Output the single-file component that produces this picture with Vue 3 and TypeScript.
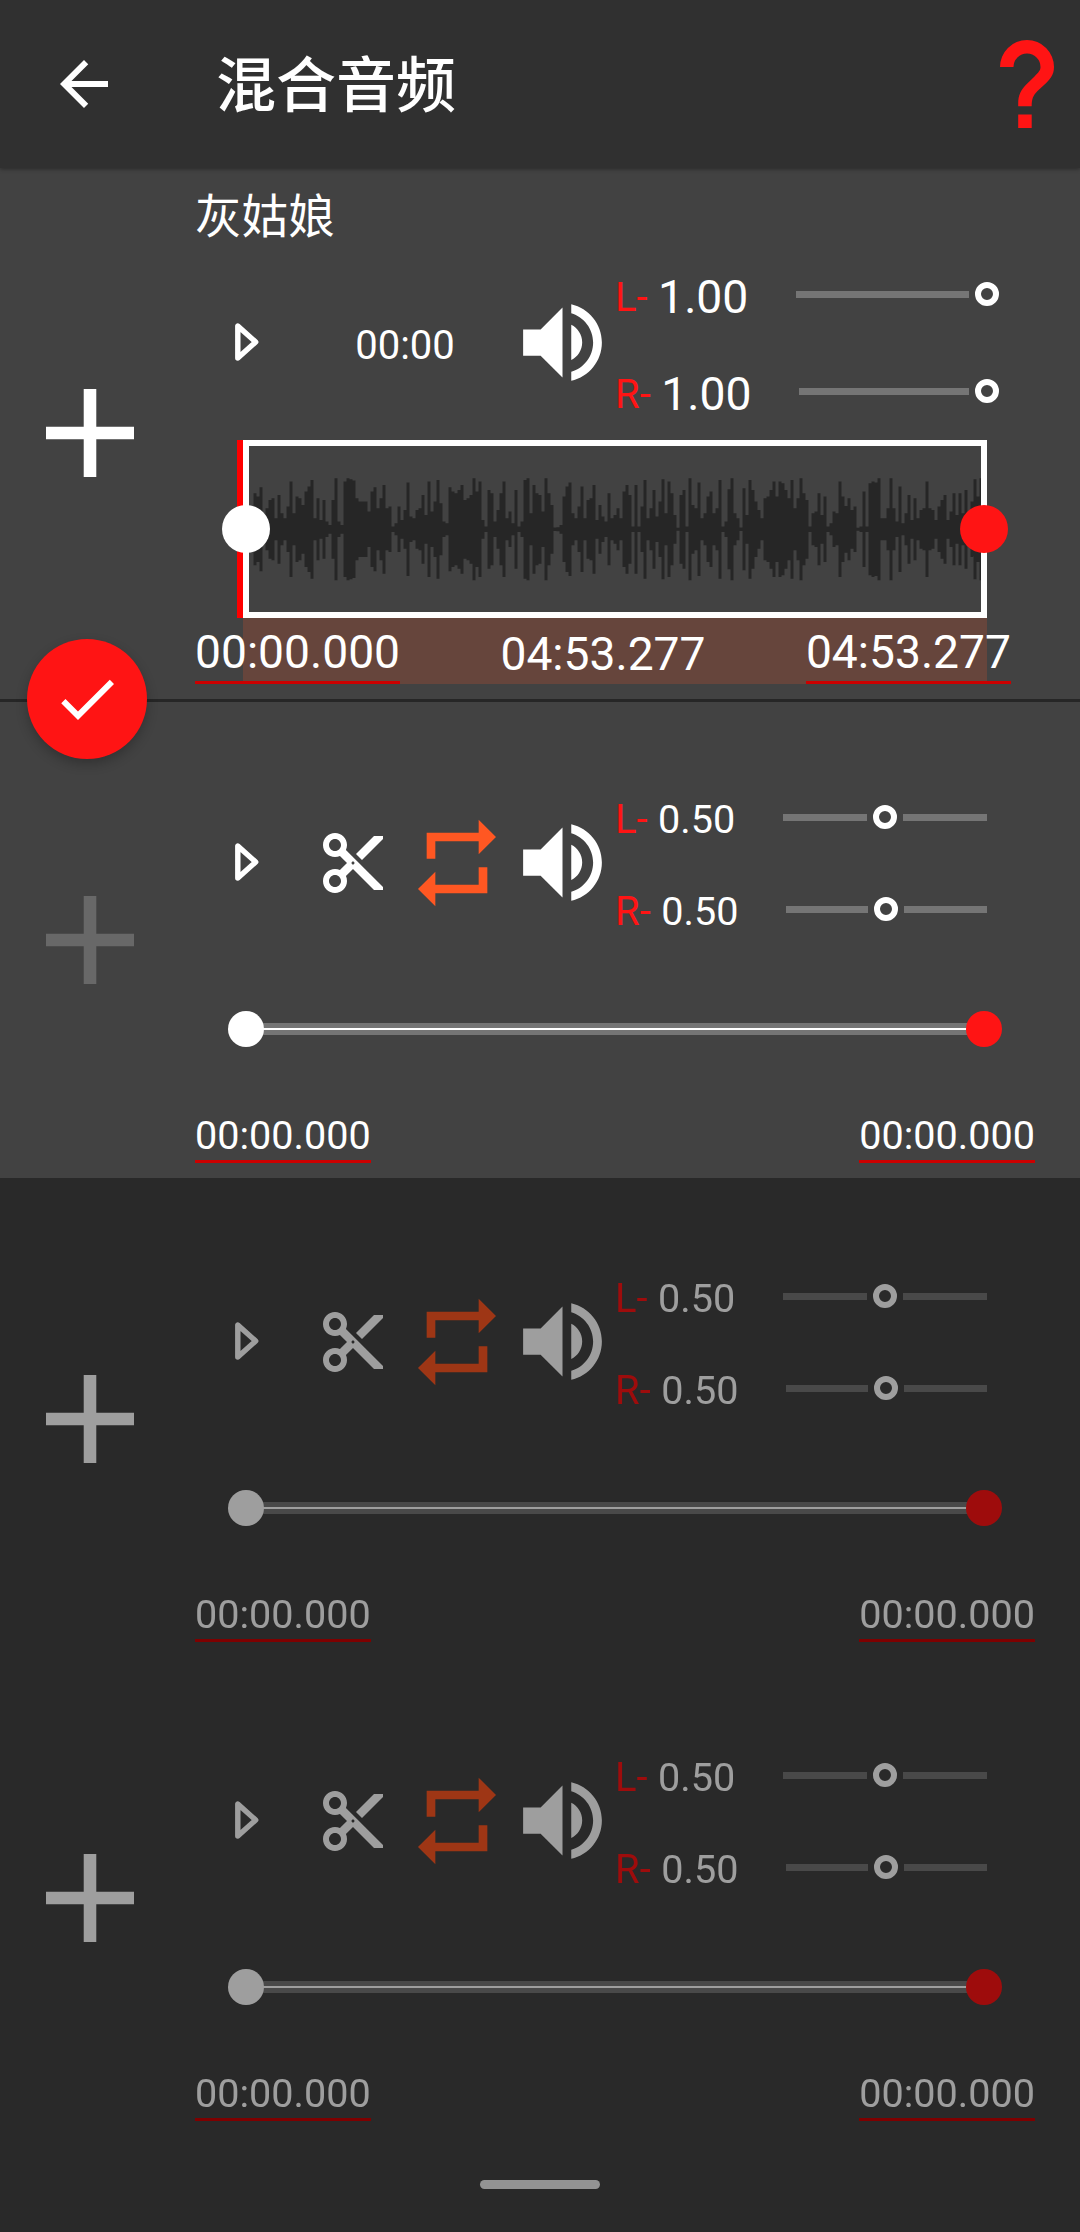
<script setup lang="ts">
interface Channel {
  label: string
  value: number
}

interface Track {
  id: number
  channels: Channel[]
  start: string
  end: string
  addEnabled: boolean
  dimmed: boolean
}

const emptyTrack = (id: number, addEnabled: boolean, dimmed: boolean): Track => ({
  id,
  channels: [
    { label: 'L-', value: 0.5 },
    { label: 'R-', value: 0.5 },
  ],
  start: '00:00.000',
  end: '00:00.000',
  addEnabled,
  dimmed,
})

const mainChannels: Channel[] = [
  { label: 'L-', value: 1 },
  { label: 'R-', value: 1 },
]

const tracks: Track[] = [
  emptyTrack(2, false, false),
  emptyTrack(3, true, true),
  emptyTrack(4, true, true),
]

// Peak levels of the loaded audio, one per 3px column
const peaks: number[] = [
  108, 98, 126, 38, 63, 88, 93, 33, 103, 48, 33, 68, 143, 48, 98, 93, 73, 113, 128, 148, 33, 93, 28, 88, 23,
  13, 88, 153, 23, 13, 143, 153, 150, 146, 93, 83, 83, 83, 53, 113, 126, 63, 93, 133, 63, 68, 8, 18, 68, 28,
  58, 140, 38, 33, 58, 63, 103, 43, 143, 53, 83, 148, 78, 23, 18, 126, 113, 108, 118, 133, 88, 93, 103, 153,
  113, 143, 28, 8, 118, 108, 23, 58, 108, 143, 33, 53, 18, 118, 8, 23, 148, 153, 48, 133, 108, 103, 53, 153,
  108, 73, 5, 6, 13, 98, 128, 140, 48, 33, 68, 128, 33, 88, 93, 133, 28, 73, 38, 23, 108, 33, 43, 63, 33,
  113, 133, 103, 8, 133, 8, 68, 148, 33, 63, 118, 38, 83, 150, 48, 143, 108, 43, 3, 103, 118, 8, 153, 73, 63,
  140, 33, 48, 98, 113, 48, 63, 148, 8, 23, 120, 153, 48, 33, 5, 123, 43, 148, 118, 83, 58, 33, 93, 98, 118,
  143, 98, 143, 138, 118, 93, 148, 63, 93, 153, 108, 88, 8, 48, 53, 108, 43, 98, 8, 18, 53, 48, 143, 98, 70,
  93, 58, 68, 3, 8, 113, 8, 138, 143, 140, 153, 33, 33, 63, 153, 63, 23, 128, 18, 48, 103, 28, 93, 33, 58, 63,
  143, 63, 58, 28, 68, 88, 103, 28, 53, 108, 43, 108, 48, 118, 48, 83, 150, 98, 153,
]

const wavePath = peaks
  .map((p, i) => {
    const x = 4.5 + i * 3
    const h = Math.max(p / 3, 1.5)
    return `M${x} ${(83.3 - h).toFixed(1)}h3v${(h * 2).toFixed(1)}h-3z`
  })
  .join('')

const volumeIcon =
  'M3 9v6h4l5 5V4L7 9H3zm13.5 3c0-1.77-1.02-3.29-2.5-4.03v8.05c1.48-.73 2.5-2.25 2.5-4.02zM14 3.23v2.06c2.89.86 5 3.54 5 6.71s-2.11 5.85-5 6.71v2.06c4.01-.91 7-4.49 7-8.77s-2.99-7.86-7-8.77z'
const cutIcon =
  'M9.64 7.64c.23-.5.36-1.05.36-1.64 0-2.21-1.79-4-4-4S2 3.79 2 6s1.79 4 4 4c.59 0 1.14-.13 1.64-.36L10 12l-2.36 2.36C7.14 14.13 6.59 14 6 14c-2.21 0-4 1.79-4 4s1.79 4 4 4 4-1.79 4-4c0-.59-.13-1.14-.36-1.64L12 14l7 7h3v-1L9.64 7.64zM6 8c-1.1 0-2-.89-2-2s.9-2 2-2 2 .89 2 2-.9 2-2 2zm0 12c-1.1 0-2-.89-2-2s.9-2 2-2 2 .89 2 2-.9 2-2 2zm6-7.5c-.28 0-.5-.22-.5-.5s.22-.5.5-.5.5.22.5.5-.22.5-.5.5zM19 3l-6 6 2 2 7-7V3z'
const repeatIcon = 'M7 7h10v3l4-4-4-4v3H5v6h2V7zm10 10H7v-3l-4 4 4 4v-3h12v-6h-2v4z'
const addIcon = 'M19 13h-6v6h-2v-6H5v-2h6V5h2v6h6v2z'
</script>

<template>
  <div class="screen">
    <header class="bar">
      <svg class="back" viewBox="0 0 24 24"><path d="M20 11H7.83l5.59-5.59L12 4l-8 8 8 8 1.41-1.41L7.83 13H20v-2z" /></svg>
      <h1>混合音频</h1>
      <svg class="help" viewBox="0 0 54 88">
        <path d="M0 27a27 27 0 0 1 54 0c0 8.500-4.500 13-10 18l-6.500 6c-4.500 4.500-5.800 8-5.800 15.300H18.200v-3c0-8 2.800-13.600 7.800-18.600l8.500-8.300c3.800-3.800 6-5.800 6-9.400a13.500 13.500 0 0 0-27 0z" />
        <rect x="18.200" y="74.500" width="13.500" height="13.500" />
      </svg>
    </header>

    <section class="track main">
      <div class="side">
        <svg class="add" viewBox="5 5 14 14"><path :d="addIcon" /></svg>
      </div>
      <div class="body">
        <div class="name">灰姑娘</div>
        <div class="controls">
          <div class="play">
            <svg viewBox="0 0 24 38"><path d="M2.800 3v32L20.700 19z" /></svg>
          </div>
          <div class="middle elapsed">00:00</div>
          <svg class="volume" viewBox="0 0 24 24"><path :d="volumeIcon" /></svg>
          <div class="channels">
            <div v-for="c in mainChannels" :key="c.label" class="channel">
              <span class="label">{{ c.label }}</span>
              <span class="value">{{ c.value.toFixed(2) }}</span>
              <div class="slider">
                <i class="rail" :style="{ flexGrow: c.value }"></i>
                <i class="knob"></i>
              </div>
            </div>
          </div>
        </div>
        <div class="wave">
          <svg viewBox="0 0 732 166"><path :d="wavePath" /></svg>
          <i class="handle from"></i>
          <i class="handle to"></i>
        </div>
        <div class="times">
          <span class="edit">00:00.000</span>
          <span class="length">04:53.277</span>
          <span class="edit">04:53.277</span>
        </div>
      </div>
      <button class="fab">
        <svg viewBox="0 0 24 24"><path d="M9 16.170L4.830 12l-1.420 1.410L9 19 21 7l-1.410-1.410z" /></svg>
      </button>
    </section>

    <section v-for="t in tracks" :key="t.id" class="track slot" :class="{ dimmed: t.dimmed, ruled: !t.dimmed }">
      <div class="side">
        <svg class="add" :class="{ off: !t.addEnabled }" viewBox="5 5 14 14"><path :d="addIcon" /></svg>
      </div>
      <div class="body">
        <div class="controls">
          <div class="play">
            <svg viewBox="0 0 24 38"><path d="M2.800 3v32L20.700 19z" /></svg>
          </div>
          <div class="middle">
            <div class="cell"><svg class="cut" viewBox="0 0 24 24"><path :d="cutIcon" /></svg></div>
            <div class="cell"><svg class="repeat" viewBox="0 0 24 24"><path :d="repeatIcon" /></svg></div>
          </div>
          <svg class="volume" viewBox="0 0 24 24"><path :d="volumeIcon" /></svg>
          <div class="channels">
            <div v-for="c in t.channels" :key="c.label" class="channel">
              <span class="label">{{ c.label }}</span>
              <span class="value">{{ c.value.toFixed(2) }}</span>
              <div class="slider">
                <i class="rail" :style="{ flexGrow: c.value }"></i>
                <i class="knob"></i>
                <i class="rail" :style="{ flexGrow: 1 - c.value }"></i>
              </div>
            </div>
          </div>
        </div>
        <div class="range">
          <i class="dot"></i>
          <i class="line"></i>
          <i class="dot end"></i>
        </div>
        <div class="times">
          <span class="edit">{{ t.start }}</span>
          <span class="edit">{{ t.end }}</span>
        </div>
      </div>
    </section>

    <footer class="nav"><i></i></footer>
  </div>
</template>

<style>
body {
  background: #292929;
}
</style>

<style scoped>
.screen {
  width: 1080px;
  height: 2232px;
  overflow: hidden;
  display: flex;
  flex-direction: column;
  background: #292929;
  color: #fff;
  font-family: Roboto, 'Noto Sans CJK SC', sans-serif;
  font-size: 40px;
}

svg {
  display: block;
  fill: currentColor;
  flex: none;
}

.bar {
  height: 168px;
  flex: none;
  display: flex;
  align-items: center;
  background: #303030;
  box-shadow: 0 1px 4px rgba(0, 0, 0, 0.4);
  position: relative;
  z-index: 3;
}

.back {
  width: 72px;
  height: 72px;
  margin-left: 48px;
}

h1 {
  margin: 6px 0 0 96px;
  font: 500 60px/84px Roboto, 'Noto Sans CJK SC', sans-serif;
}

.help {
  width: 54px;
  height: 88px;
  margin: 0 26px 1px auto;
  color: #ff1414;
}

.track {
  position: relative;
  flex: none;
  box-sizing: border-box;
  display: flex;
  background: #424242;
}

.main {
  height: 531px;
  z-index: 2;
}

.slot {
  height: 479px;
}

.ruled {
  box-shadow: inset 0 3px #262626;
}

.dimmed {
  filter: brightness(0.62);
}

.side {
  width: 193px;
  display: flex;
  align-items: center;
}

.add {
  width: 88px;
  height: 88px;
  margin-left: 46px;
}

.main .add {
  margin-bottom: 1px;
}

.slot .add {
  margin-top: 3px;
}

.add.off {
  color: #686868;
}

.body {
  flex: 1;
}

.name {
  height: 78px;
  padding-left: 2px;
  font-size: 46.600px;
  line-height: 99px;
}

.controls {
  display: flex;
  align-items: center;
  height: 194px;
}

.slot .controls {
  margin-top: 72px;
  height: 184px;
}

.play {
  width: 107px;
  display: flex;
  justify-content: center;
}

.play svg {
  width: 24px;
  height: 38px;
  margin-bottom: 2px;
  fill: none;
  stroke: currentColor;
  stroke-width: 5.400;
  stroke-linejoin: round;
}

.middle {
  width: 210px;
  display: flex;
}

.elapsed {
  justify-content: center;
  padding-top: 4px;
}

.cell {
  width: 105px;
  display: flex;
  align-items: center;
  justify-content: center;
}

.cut {
  width: 72px;
  height: 72px;
}

.repeat {
  width: 104px;
  height: 104px;
  margin: 0 1px 1px 0;
  color: #ff5722;
}

.volume {
  width: 105px;
  height: 105px;
  margin-bottom: 2px;
}

.channels {
  width: 372px;
  align-self: stretch;
  display: flex;
  flex-direction: column;
}

.channel {
  flex: 1;
  display: flex;
  align-items: center;
}

.label {
  color: #ff1414;
  padding-top: 5px;
  margin-right: 10.500px;
}

.value {
  padding-top: 5px;
  font-size: 39.600px;
}

.main .value {
  font-size: 46.300px;
}

.slider {
  flex: 1;
  margin-left: 47.500px;
  display: flex;
  align-items: center;
  gap: 6px;
}

.main .slider {
  margin-right: -12px;
  margin-bottom: 1px;
}

.rail {
  height: 7px;
  background: #757575;
}

.knob {
  width: 24px;
  height: 24px;
  box-sizing: border-box;
  border: 6px solid #fff;
  border-radius: 50%;
}

.wave {
  position: relative;
  width: 744px;
  height: 178px;
  margin-left: 50px;
  box-sizing: border-box;
  border: 6px solid #fff;
  box-shadow: -6px 0 #f00;
  color: #262626;
}

.wave svg {
  width: 732px;
  height: 166px;
}

.handle {
  position: absolute;
  top: 59px;
  width: 48px;
  height: 48px;
  border-radius: 50%;
  background: #fff;
}

.from {
  left: -27px;
}

.to {
  right: -27px;
  background: #ff1414;
}

.times {
  display: flex;
  justify-content: space-between;
  box-sizing: border-box;
}

.edit {
  box-sizing: border-box;
  border-bottom: 3px solid #cc0000;
}

.main .times {
  width: 816px;
  height: 66px;
  margin-left: 2px;
  font-size: 46.200px;
  line-height: 68px;
  background: linear-gradient(#66453c, #66453c) no-repeat 48px 0 / 744px 66px;
}

.main .length {
  line-height: 72px;
}

.slot .times {
  width: 840px;
  height: 56px;
  margin: 60px 0 0 2px;
  font-size: 39.600px;
  line-height: 57px;
}

.range {
  width: 774px;
  margin: 56px 0 0 35px;
  height: 36px;
  display: flex;
  align-items: center;
}

.dot {
  position: relative;
  z-index: 1;
  width: 36px;
  height: 36px;
  border-radius: 50%;
  background: #fff;
}

.dot.end {
  background: #ff1414;
}

.line {
  flex: 1;
  height: 12px;
  margin: 0 -2px;
  background: linear-gradient(#757575 5px, #fff 5px, #fff 7px, #757575 7px);
}

.fab {
  position: absolute;
  left: 27px;
  bottom: -60px;
  width: 120px;
  height: 120px;
  padding: 0;
  border: 0;
  border-radius: 50%;
  display: flex;
  align-items: center;
  justify-content: center;
  color: #fff;
  background: #ff1414;
  box-shadow: 0 5px 12px rgba(0, 0, 0, 0.24);
}

.fab svg {
  width: 72px;
  height: 72px;
}

.nav {
  flex: 1;
  display: flex;
  justify-content: center;
  align-items: flex-start;
}

.nav i {
  width: 120px;
  height: 9px;
  margin-top: 44px;
  border-radius: 5px;
  background: #939393;
}
</style>
